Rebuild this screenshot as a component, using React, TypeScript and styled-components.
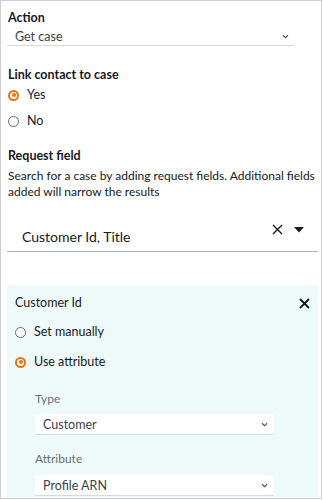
import React from "react";
import styled, { createGlobalStyle } from "styled-components";

const Global = createGlobalStyle`
  html, body { margin: 0; padding: 0; background: #fff; }
  body { font-family: Lato, "Liberation Sans", Arial, sans-serif; color: #16191f; }
  * { box-sizing: border-box; }
`;

const Frame = styled.div`
  width: 322px;
  height: 499px;
  border: 1px solid #cfcfcf;
  overflow: hidden;
  padding: 9px 0 0 6px;
  display: flex;
  flex-direction: column;
`;

const Label = styled.div<{ $mt?: number }>`
  margin-top: ${(p) => p.$mt ?? 0}px;
  font-size: 12.5px;
  font-weight: 700;
  line-height: 16px;
  padding-left: 1px;
`;

const SubLabel = styled.div<{ $mt?: number }>`
  margin-top: ${(p) => p.$mt ?? 0}px;
  font-size: 12px;
  color: #687078;
  line-height: 16px;
`;

const Select = styled.div<{ $width: number; $boxed?: boolean; $mt?: number }>`
  margin-top: ${(p) => p.$mt ?? 0}px;
  width: ${(p) => p.$width}px;
  height: ${(p) => (p.$boxed ? 21 : 19)}px;
  display: flex;
  align-items: center;
  justify-content: space-between;
  padding: 0 ${(p) => (p.$boxed ? 6 : 5)}px 0 8px;
  font-size: 12.5px;
  color: #3b4148;
  background: ${(p) => (p.$boxed ? "#fff" : "transparent")};
  border-bottom: 1px solid #d5dbdb;
  border-radius: ${(p) => (p.$boxed ? "2px" : "0")};
`;

const Chevron = () => (
  <svg width="7" height="5" viewBox="0 0 7 5">
    <path d="M1 1.2 L3.5 3.6 L6 1.2" fill="none" stroke="#545b64" strokeWidth="1.2" />
  </svg>
);

const RadioGroup = styled.div<{ $gap: number; $mt: number; $pl?: number }>`
  margin-top: ${(p) => p.$mt}px;
  padding-left: ${(p) => p.$pl ?? 0}px;
  display: flex;
  flex-direction: column;
  gap: ${(p) => p.$gap}px;
`;

const RadioRow = styled.div`
  display: flex;
  align-items: center;
  gap: 8px;
  font-size: 12.5px;
  line-height: 16px;
`;

const RadioCircle = styled.span<{ $checked?: boolean }>`
  width: 11px;
  height: 11px;
  border-radius: 50%;
  border: ${(p) => (p.$checked ? "2px solid #ec7211" : "1.2px solid #687078")};
  background: #fff;
  display: flex;
  align-items: center;
  justify-content: center;
  &::after {
    content: "";
    display: ${(p) => (p.$checked ? "block" : "none")};
    width: 4px;
    height: 4px;
    border-radius: 50%;
    background: #ec7211;
  }
`;

const Radio = ({ checked, children }: { checked?: boolean; children: React.ReactNode }) => (
  <RadioRow>
    <RadioCircle $checked={checked} />
    <span>{children}</span>
  </RadioRow>
);

const Description = styled.div`
  margin-top: 4px;
  font-size: 12px;
  line-height: 16px;
  color: #16191f;
  padding-left: 1px;
  width: 312px;
`;

const MultiSelect = styled.div`
  margin-top: 10px;
  width: 311px;
  height: 42px;
  border-bottom: 1px solid #aab7b8;
  display: flex;
  align-items: flex-start;
  justify-content: space-between;
  padding: 14px 14px 0 15px;
`;

const MultiValue = styled.div`
  font-size: 14px;
  margin-top: 4px;
  color: #16191f;
`;

const MultiIcons = styled.div`
  display: flex;
  align-items: center;
  gap: 11px;
`;

const Panel = styled.div`
  margin-top: 33px;
  width: 311px;
  flex: 1;
  background: #eef9fa;
  padding: 10px 8px 0 8px;
  display: flex;
  flex-direction: column;
`;

const PanelHeader = styled.div`
  display: flex;
  justify-content: space-between;
  align-items: center;
  font-size: 12.5px;
  line-height: 16px;
`;

const Nested = styled.div`
  margin-top: 21px;
  padding-left: 20px;
  display: flex;
  flex-direction: column;
`;

const CloseIcon = ({ weight }: { weight: number }) => (
  <svg width="11" height="11" viewBox="0 0 11 11">
    <path d="M1 1 L10 10 M10 1 L1 10" stroke="#16191f" strokeWidth={weight} />
  </svg>
);

export default function App() {
  return (
    <>
      <Global />
      <Frame>
        <Label>Action</Label>
        <Select $width={287} $mt={1}>
          <span>Get case</span>
          <Chevron />
        </Select>

        <Label $mt={21}>Link contact to case</Label>
        <RadioGroup $gap={10} $mt={4} $pl={1}>
          <Radio checked>Yes</Radio>
          <Radio>No</Radio>
        </RadioGroup>

        <Label $mt={19}>Request field</Label>
        <Description>
          Search for a case by adding request fields. Additional fields added will narrow the results
        </Description>

        <MultiSelect>
          <MultiValue>Customer Id, Title</MultiValue>
          <MultiIcons>
            <CloseIcon weight={1.4} />
            <svg width="10" height="6" viewBox="0 0 10 6">
              <path d="M0 0 L10 0 L5 5.5 Z" fill="#16191f" />
            </svg>
          </MultiIcons>
        </MultiSelect>

        <Panel>
          <PanelHeader>
            <span>Customer Id</span>
            <CloseIcon weight={1.8} />
          </PanelHeader>
          <RadioGroup $gap={14} $mt={13}>
            <Radio>Set manually</Radio>
            <Radio checked>Use attribute</Radio>
          </RadioGroup>
          <Nested>
            <SubLabel>Type</SubLabel>
            <Select $width={239} $boxed $mt={7}>
              <span>Customer</span>
              <Chevron />
            </Select>
            <SubLabel $mt={16}>Attribute</SubLabel>
            <Select $width={239} $boxed $mt={8}>
              <span>Profile ARN</span>
              <Chevron />
            </Select>
          </Nested>
        </Panel>
      </Frame>
    </>
  );
}
